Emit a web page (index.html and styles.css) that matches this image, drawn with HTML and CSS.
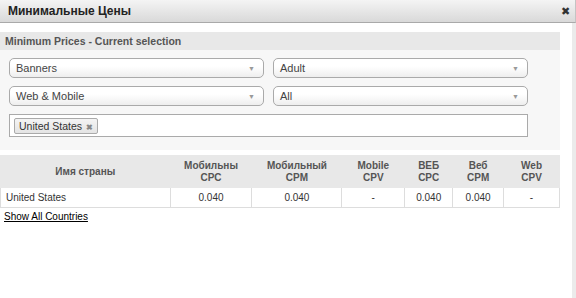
FILE: index.html
```html
<!DOCTYPE html>
<html lang="ru">

<head>
    <meta charset="UTF-8">
    <meta name="viewport" content="width=device-width, initial-scale=1.0">
    <title>Минимальные Цены</title>

    <link rel="stylesheet" href="styles.css">
</head>

<body>
    <div id="dialog">
        <div class="title-bar">
            <span class="title">Минимальные Цены</span>
            <span class="close">&#10006;</span>
        </div>

        <div class="body">
            <div class="content">
                <div class="panel">
                    <div class="panel-head">Minimum Prices - Current selection</div>
                    <div class="panel-body">
                        <div class="row">
                            <div class="select"><span>Banners</span><i class="arrow">&#9660;</i></div>
                            <div class="select"><span>Adult</span><i class="arrow">&#9660;</i></div>
                        </div>
                        <div class="row">
                            <div class="select"><span>Web &amp; Mobile</span><i class="arrow">&#9660;</i></div>
                            <div class="select"><span>All</span><i class="arrow">&#9660;</i></div>
                        </div>
                        <div class="multi">
                            <span class="tag">United States <b>&#10006;</b></span>
                        </div>
                    </div>
                </div>

                <table id="prices">
                    <tr>
                        <th class="c1">Имя страны</th>
                        <th class="c2">Мобильны<br>CPC</th>
                        <th class="c3">Мобильный<br>CPM</th>
                        <th class="c4">Mobile<br>CPV</th>
                        <th class="c5">ВЕБ<br>CPC</th>
                        <th class="c6">Веб<br>CPM</th>
                        <th class="c7">Web<br>CPV</th>
                    </tr>
                    <tr>
                        <td class="name">United States</td>
                        <td>0.040</td>
                        <td>0.040</td>
                        <td>-</td>
                        <td>0.040</td>
                        <td>0.040</td>
                        <td>-</td>
                    </tr>
                </table>

                <a href="#" class="show-all">Show All Countries</a>
            </div>
            <div class="scroll"></div>
        </div>
    </div>
</body>

</html>
```

FILE: styles.css
```css
* {
    margin: 0;
    padding: 0;
    box-sizing: border-box;
}

body {
    font-family: "Liberation Sans", Arial, sans-serif;
    font-size: 11px;
    color: #333;
    background: #fff;
}

#dialog {
    width: 576px;
    height: 298px;
    display: flex;
    flex-direction: column;
}

.title-bar {
    height: 23px;
    display: flex;
    align-items: center;
    justify-content: space-between;
    padding: 0 5px 0 8px;
    background: linear-gradient(#f4f4f4, #d9d9d9);
    border-bottom: 1px solid #a9a9a9;
    border-right: 1px solid #c4c4c4;
}

.title {
    font-size: 12px;
    font-weight: bold;
    color: #222;
}

.close {
    font-size: 11px;
    color: #333;
}

.body {
    flex: 1;
    display: flex;
}

.content {
    width: 560px;
    padding-top: 9px;
}

.scroll {
    margin-left: 12px;
    width: 4px;
    background: #ebebeb;
}

.panel {
    background: #f7f7f7;
}

.panel-head {
    height: 18px;
    line-height: 18px;
    padding-left: 5px;
    background: #e8e8e8;
    font-size: 10.5px;
    font-weight: bold;
    color: #555;
}

.panel-body {
    padding: 8px 9px 13px 9px;
}

.row {
    display: flex;
    gap: 9px;
    margin-bottom: 8px;
}

.select {
    width: 255px;
    height: 20px;
    display: flex;
    align-items: center;
    justify-content: space-between;
    padding: 0 8px 0 6px;
    border: 1px solid #aaa;
    border-radius: 5px;
    background: linear-gradient(#fff 40%, #eee);
    color: #444;
}

.arrow {
    font-style: normal;
    font-size: 7px;
    color: #999;
}

.multi {
    width: 519px;
    height: 23px;
    display: flex;
    align-items: center;
    padding-left: 4px;
    border: 1px solid #aaa;
    background: #fff;
}

.tag {
    height: 16px;
    line-height: 14px;
    padding: 0 4px;
    border: 1px solid #aaa;
    border-radius: 2px;
    background: linear-gradient(#f4f4f4, #e4e4e4);
    font-size: 10.5px;
    color: #333;
}

.tag b {
    font-size: 8px;
    color: #888;
    margin-left: 1px;
}

#prices {
    width: 560px;
    margin-top: 5px;
    border-collapse: collapse;
    font-size: 10px;
}

#prices th {
    height: 32px;
    background: #e8e8e8;
    color: #555;
    font-weight: bold;
    text-align: center;
    border: 1px solid #e8e8e8;
    line-height: 12px;
}

#prices td {
    height: 20px;
    text-align: center;
    border: 1px solid #ddd;
    color: #333;
}

#prices td.name {
    text-align: left;
    padding-left: 5px;
}

.c1 { width: 170px; }
.c2 { width: 82px; }
.c3 { width: 90px; }
.c4 { width: 63px; }
.c5 { width: 48px; }
.c6 { width: 51px; }
.c7 { width: 56px; }

.show-all {
    display: inline-block;
    margin: 3px 0 0 4px;
    font-size: 10px;
    color: #000;
    text-decoration: underline;
}
```
